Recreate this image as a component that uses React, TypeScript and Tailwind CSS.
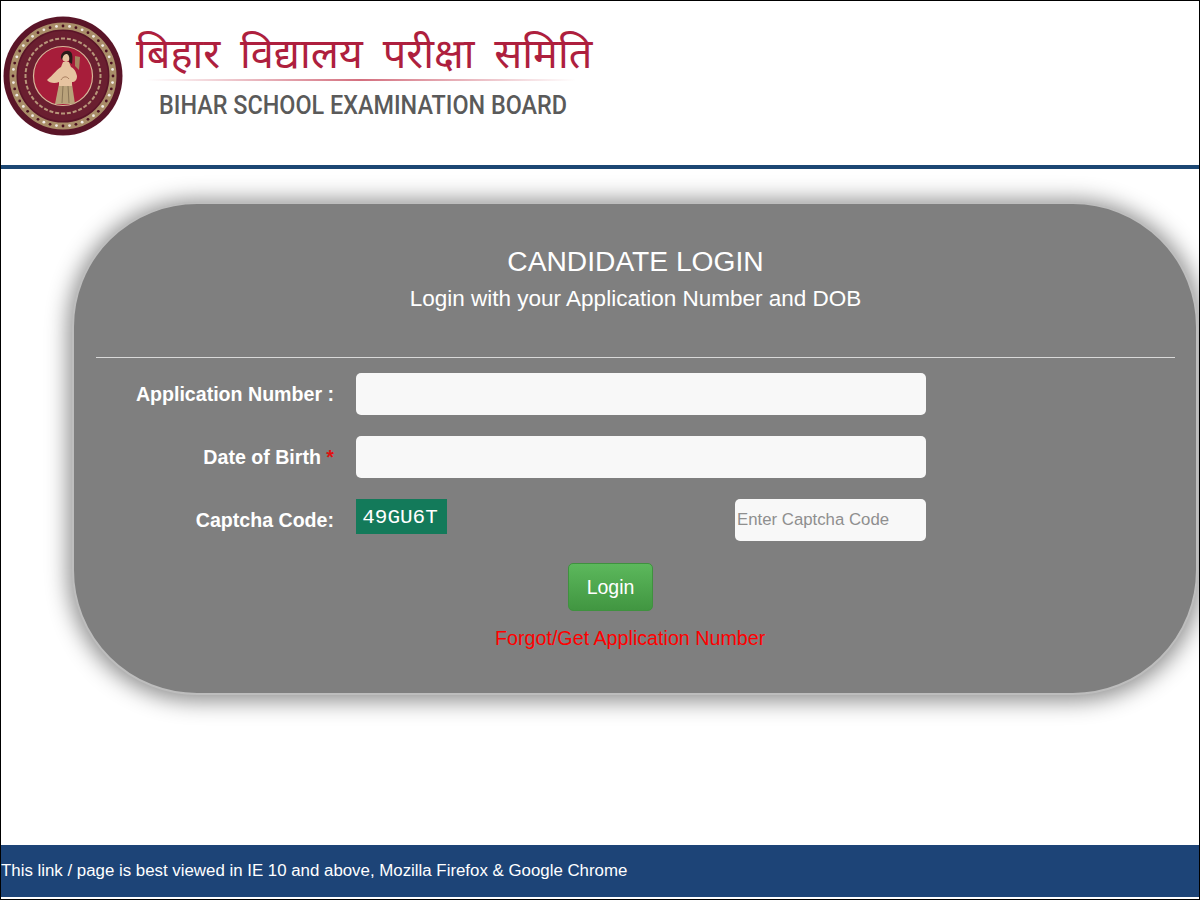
import React from "react";

const Seal: React.FC = () => {
  const dots = Array.from({ length: 48 }, (_, i) => (i * 2 * Math.PI) / 48);
  const ticks = Array.from({ length: 40 }, (_, i) => (i * 2 * Math.PI) / 40);
  return (
    <svg width="120" height="120" viewBox="0 0 120 120" className="shrink-0">
      <circle cx="60" cy="60" r="59.5" fill="#5a1528" />
      <circle cx="60" cy="60" r="50" fill="none" stroke="#a98d68" strokeWidth="7" />
      {dots.map((a, i) => (
        <circle
          key={i}
          cx={60 + 50 * Math.cos(a)}
          cy={60 + 50 * Math.sin(a)}
          r="1.4"
          fill={i % 2 ? "#f1ebe6" : "#4a1020"}
        />
      ))}
      <circle cx="60" cy="60" r="45" fill="#6a1f30" />
      {ticks.map((a, i) => (
        <rect
          key={i}
          x={60 + 37.5 * Math.cos(a) - 2}
          y={60 + 37.5 * Math.sin(a) - 1}
          width="4"
          height="2"
          fill="#b8977a"
          transform={`rotate(${i * 9 + 90} ${60 + 37.5 * Math.cos(a)} ${60 + 37.5 * Math.sin(a)})`}
        />
      ))}
      <circle cx="60" cy="60" r="29.5" fill="#a71d3a" stroke="#d8b89a" strokeWidth="1.2" />
      {/* figure */}
      <path d="M72 40 L77 41 L76 54 L72 50 Z" fill="#a5835f" />
      <path d="M56 68 L69 68 L72 88 L52 88 Z" fill="#b9a27a" />
      <path d="M60 70 L59 87 M65 70 L66 87" stroke="#7d6a4c" strokeWidth="0.8" fill="none" />
      <path
        d="M58 51 C54 53 50 59 44 64 C46 67 52 68 56 66 L56 70 L69 70 L69 66 C72 66 74 64 74 60 C73 56 72 53 68 51 L66 46 L60 46 Z"
        fill="#e6c3a0"
      />
      <path d="M58 64 C60 60 64 60 66 63" stroke="#a97f60" strokeWidth="1" fill="none" />
      <ellipse cx="63" cy="41" rx="4" ry="5" fill="#e6c3a0" />
      <path d="M58 42 C57 35 67 32 69 38 C70 42 69 46 69 48 L66 46 C67 42 66 39 64 38 C61 38 60 40 59 44 Z" fill="#2a1a18" />
    </svg>
  );
};

const App: React.FC = () => {
  return (
    <div className="w-[1200px] h-[900px] overflow-hidden bg-white border border-black font-['Liberation_Sans',Arial,sans-serif] flex flex-col">
      {/* Header */}
      <div className="h-[168px] shrink-0 border-b-[4px] border-[#1c4773] flex items-start pl-[2px] pt-[15px]">
        <Seal />
        <div className="ml-[13px] w-[460px] flex flex-col items-start">
          <div className="mt-[19px] h-[46px] text-[41.5px] leading-[46px] [word-spacing:9px] text-[#ae1f3e] whitespace-nowrap font-['Noto_Sans_Devanagari','Lohit_Devanagari','Noto_Sans',sans-serif]">
            बिहार विद्यालय परीक्षा समिति
          </div>
          <div className="-mt-[2px] ml-[10px] h-[2px] w-[430px] bg-gradient-to-r from-transparent via-[#d4707f] to-transparent" />
          <div className="mt-[10px] ml-[23px] origin-left scale-x-[0.936] text-[25px] leading-[30px] font-medium text-[#5a5a5a] whitespace-nowrap font-['Roboto',sans-serif]">
            BIHAR SCHOOL EXAMINATION BOARD
          </div>
        </div>
      </div>

      {/* Login card */}
      <div className="flex-1">
        <div className="ml-[71px] mt-[33px] w-[1126px] h-[493px] rounded-[125px] border-2 border-[#bdbdbd] bg-[#7f7f7f] shadow-[0_2px_22px_4px_rgba(0,0,0,0.45)] pl-[22px] pr-[21px] text-white">
          <div className="pt-[39px] text-center text-[28.2px] leading-[36px]">CANDIDATE LOGIN</div>
          <div className="mt-[5px] text-center text-[22.5px] leading-[30px]">
            Login with your Application Number and DOB
          </div>
          <div className="mt-[43px] h-px bg-[#d9d9d9]" />

          <div className="mt-[15px] flex flex-col gap-[21px]">
            <div className="flex items-start">
              <label className="w-[260px] pr-[22px] text-right text-[19.6px] leading-[42px] font-bold whitespace-nowrap">Application Number :</label>
              <div className="h-[42px] w-[570px] rounded-[5px] bg-[#f8f8f8]" />
            </div>
            <div className="flex items-start">
              <label className="w-[260px] pr-[22px] text-right text-[19.6px] leading-[42px] font-bold whitespace-nowrap">
                Date of Birth <span className="text-[#e01010]">*</span>
              </label>
              <div className="h-[42px] w-[570px] rounded-[5px] bg-[#f8f8f8]" />
            </div>
            <div className="flex items-start">
              <label className="w-[260px] pr-[22px] text-right text-[19.6px] font-bold leading-[42px] whitespace-nowrap">Captcha Code:</label>
              <div className="flex w-[570px] justify-between">
                <div className="h-[35px] w-[91px] bg-[#137a5a] pr-[3px] text-center text-[21px] leading-[37px] text-white font-['Liberation_Mono',monospace]">
                  49GU6T
                </div>
                <div className="h-[42px] w-[191px] rounded-[5px] bg-[#f8f8f8] pl-[2px] text-[16.8px] leading-[42px] text-[#8f8f8f] whitespace-nowrap">
                  Enter Captcha Code
                </div>
              </div>
            </div>
          </div>

          <div className="mt-[22px] ml-[472px] h-[48px] w-[85px] rounded-[5px] border border-[#3f913f] bg-gradient-to-b from-[#5cb85c] to-[#419641] text-center text-[19.5px] leading-[46px] text-white">
            Login
          </div>
          <div className="mt-[15px] ml-[399px] text-[19.7px] leading-[24px] text-[#ff0000] whitespace-nowrap">
            Forgot/Get Application Number
          </div>
        </div>
      </div>

      {/* Footer */}
      <div className="mb-[2px] h-[52px] shrink-0 bg-[#1d4477] text-[16.85px] leading-[51px] text-white whitespace-nowrap">
        This link / page is best viewed in IE 10 and above, Mozilla Firefox &amp; Google Chrome
      </div>
    </div>
  );
};

export default App;
